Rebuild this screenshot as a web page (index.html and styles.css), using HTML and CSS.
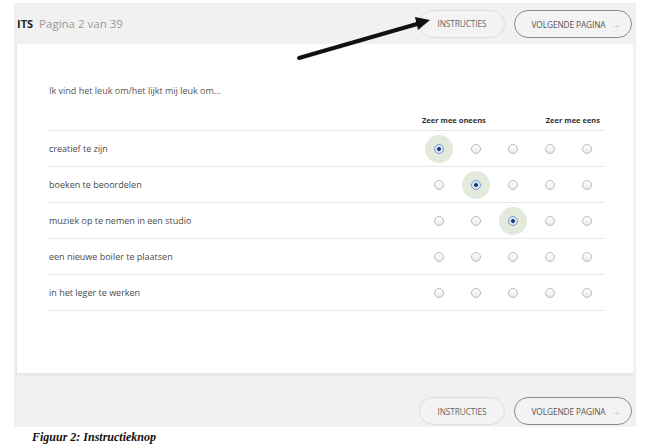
FILE: index.html
```html
<!DOCTYPE html>
<html lang="nl">
<head>
  <meta charset="UTF-8">
  <title>ITS - Pagina 2 van 39</title>
  <link rel="stylesheet" href="styles.css">
</head>
<body>
  <div class="panel">
    <!-- Kopregel -->
    <div class="topbar">
      <div class="title"><b>ITS</b> <span>Pagina 2 van 39</span></div>
      <div class="actions">
        <button class="btn">Instructies</button>
        <button class="btn btn-next">Volgende pagina <span class="arrow">&rarr;</span></button>
      </div>
    </div>

    <!-- Vragenlijst -->
    <div class="card">
      <p class="intro">Ik vind het leuk om/het lijkt mij leuk om...</p>

      <div class="row head">
        <div></div>
        <div class="scale-left">Zeer mee oneens</div>
        <div class="scale-right">Zeer mee eens</div>
      </div>

      <div class="row"><div class="label">creatief te zijn</div>
        <span class="cell on"><i class="radio checked"></i></span><span class="cell"><i class="radio"></i></span><span class="cell"><i class="radio"></i></span><span class="cell"><i class="radio"></i></span><span class="cell"><i class="radio"></i></span>
      </div>
      <div class="row"><div class="label">boeken te beoordelen</div>
        <span class="cell"><i class="radio"></i></span><span class="cell on"><i class="radio checked"></i></span><span class="cell"><i class="radio"></i></span><span class="cell"><i class="radio"></i></span><span class="cell"><i class="radio"></i></span>
      </div>
      <div class="row"><div class="label">muziek op te nemen in een studio</div>
        <span class="cell"><i class="radio"></i></span><span class="cell"><i class="radio"></i></span><span class="cell on"><i class="radio checked"></i></span><span class="cell"><i class="radio"></i></span><span class="cell"><i class="radio"></i></span>
      </div>
      <div class="row"><div class="label">een nieuwe boiler te plaatsen</div>
        <span class="cell"><i class="radio"></i></span><span class="cell"><i class="radio"></i></span><span class="cell"><i class="radio"></i></span><span class="cell"><i class="radio"></i></span><span class="cell"><i class="radio"></i></span>
      </div>
      <div class="row"><div class="label">in het leger te werken</div>
        <span class="cell"><i class="radio"></i></span><span class="cell"><i class="radio"></i></span><span class="cell"><i class="radio"></i></span><span class="cell"><i class="radio"></i></span><span class="cell"><i class="radio"></i></span>
      </div>
    </div>

    <!-- Onderste knoppen -->
    <div class="bottombar">
      <button class="btn">Instructies</button>
      <button class="btn btn-next">Volgende pagina <span class="arrow">&rarr;</span></button>
    </div>

    <!-- Pijl naar de instructieknop -->
    <svg class="pointer" width="140" height="56" viewBox="0 0 140 56">
      <line x1="3" y1="50" x2="121" y2="16" stroke="#111" stroke-width="4" stroke-linecap="round"/>
      <polygon points="134,12 122,22 119,9" fill="#111"/>
    </svg>
  </div>

  <p class="caption">Figuur 2: Instructieknop</p>
</body>
</html>
```

FILE: styles.css
```css
body {
  margin: 0;
  background-color: #fff;
  font-family: "Open Sans", Arial, sans-serif;
  color: #444;
}
.panel {
  position: relative;
  width: 622px;
  margin: 3px 0 0 14px;
  background-color: #f1f1f1;
}
.topbar {
  height: 41px;
  display: flex;
  align-items: center;
  justify-content: space-between;
  padding: 0 4px 0 3px;
}
.title {
  font-size: 11.5px;
  color: #999;
}
.title b {
  color: #222;
  font-size: 11px;
  margin-right: 3px;
}
.actions, .bottombar {
  display: flex;
  gap: 9px;
}
.btn {
  height: 28px;
  width: 86px;
  padding: 0;
  border: 1px solid #dcdcdc;
  border-radius: 14px;
  background-color: #f3f3f3;
  font-family: "Open Sans", Arial, sans-serif;
  font-size: 8.3px;
  letter-spacing: -0.1px;
  text-transform: uppercase;
  color: #666;
}
.btn-next {
  width: 118px;
  border-color: #8a8a8a;
  color: #555;
  padding-left: 6px;
}
.arrow {
  color: #aaa;
  font-size: 10px;
  margin-left: 3px;
}
.card {
  height: 332px;
  margin: 0 3px 0 2px;
  padding: 0 33px 0 32px;
  background-color: #fff;
  border-left: 1px solid #e6e6e6;
  border-bottom: 3px solid #e8e8e8;
  box-sizing: border-box;
}
.intro {
  margin: 0;
  padding-top: 40px;
  font-size: 9px;
  color: #555;
}
.row {
  display: grid;
  grid-template-columns: 1fr repeat(5, 37px);
  align-items: center;
  height: 36px;
  margin-right: -5px;
  border-bottom: 1px solid #e8e8e8;
  box-sizing: border-box;
}
.row .label {
  font-size: 9px;
  color: #4a4a4a;
}
.row.head {
  height: 21px;
  margin-top: 13px;
  font-size: 7.5px;
  font-weight: bold;
  color: #333;
}
.scale-left {
  grid-column: 2 / 4;
  padding-left: 2px;
}
.scale-right {
  grid-column: 5 / 7;
  text-align: right;
  padding-right: 5px;
}
.cell {
  display: flex;
  justify-content: center;
  align-items: center;
  height: 28px;
}
.cell.on {
  width: 28px;
  margin: 0 auto;
  border-radius: 50%;
  background-color: #e3eadc;
}
.radio {
  width: 8px;
  height: 8px;
  border: 1px solid #bcbcbc;
  border-radius: 50%;
  background: linear-gradient(#fff, #e9e9e9);
  box-sizing: content-box;
}
.radio.checked {
  border-color: #7b9cc9;
  background: radial-gradient(circle, #1d3f78 0 1.6px, #cfe0f4 2.2px, #eef4fb);
}
.bottombar {
  height: 51px;
  justify-content: flex-end;
  align-items: flex-start;
  padding: 21px 4px 0 0;
  box-sizing: border-box;
}
.pointer {
  position: absolute;
  left: 282px;
  top: 5px;
}
.caption {
  margin: 3px 0 0 32px;
  font-family: "Liberation Serif", serif;
  font-style: italic;
  font-weight: bold;
  font-size: 12px;
  color: #111;
}
```
